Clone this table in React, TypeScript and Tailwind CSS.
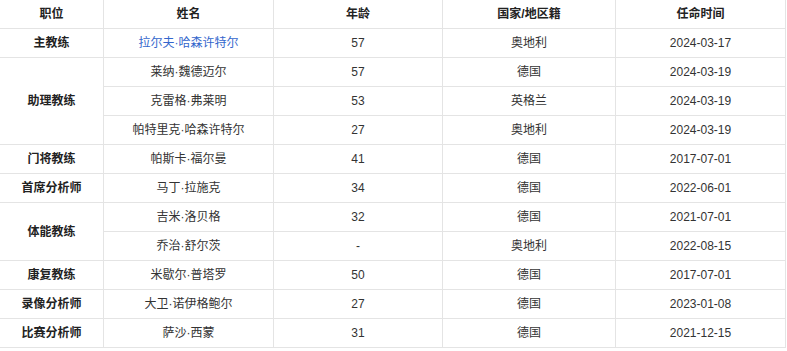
import React from "react"

type Row = { name: string; age: string; country: string; date: string; link?: boolean }
type Group = { role: string; rows: Row[] }

const groups: Group[] = [
  { role: "主教练", rows: [{ name: "拉尔夫·哈森许特尔", age: "57", country: "奥地利", date: "2024-03-17", link: true }] },
  {
    role: "助理教练",
    rows: [
      { name: "莱纳·魏德迈尔", age: "57", country: "德国", date: "2024-03-19" },
      { name: "克雷格·弗莱明", age: "53", country: "英格兰", date: "2024-03-19" },
      { name: "帕特里克·哈森许特尔", age: "27", country: "奥地利", date: "2024-03-19" },
    ],
  },
  { role: "门将教练", rows: [{ name: "帕斯卡·福尔曼", age: "41", country: "德国", date: "2017-07-01" }] },
  { role: "首席分析师", rows: [{ name: "马丁·拉施克", age: "34", country: "德国", date: "2022-06-01" }] },
  {
    role: "体能教练",
    rows: [
      { name: "吉米·洛贝格", age: "32", country: "德国", date: "2021-07-01" },
      { name: "乔治·舒尔茨", age: "-", country: "奥地利", date: "2022-08-15" },
    ],
  },
  { role: "康复教练", rows: [{ name: "米歇尔·普塔罗", age: "50", country: "德国", date: "2017-07-01" }] },
  { role: "录像分析师", rows: [{ name: "大卫·诺伊格鲍尔", age: "27", country: "德国", date: "2023-01-08" }] },
  { role: "比赛分析师", rows: [{ name: "萨沙·西蒙", age: "31", country: "德国", date: "2021-12-15" }] },
]

const cell = "h-[29px] border-r border-b border-[#e4e4e4] text-center align-middle p-0"

export default function App() {
  return (
    <div className="bg-white w-[787px] h-[351px] font-['Liberation_Sans','Noto_Sans_CJK_SC',sans-serif] text-[12px] text-[#333]">
      <table className="table-fixed border-separate border-spacing-0 w-[786px]">
        <colgroup>
          <col className="w-[104px]" />
          <col className="w-[170px]" />
          <col className="w-[169px]" />
          <col className="w-[173px]" />
          <col className="w-[170px]" />
        </colgroup>
        <thead>
          <tr className="font-bold text-[#222]">
            <th className={cell}>职位</th>
            <th className={cell}>姓名</th>
            <th className={cell}>年龄</th>
            <th className={cell}>国家/地区籍</th>
            <th className={cell}>任命时间</th>
          </tr>
        </thead>
        <tbody>
          {groups.map((g) =>
            g.rows.map((r, i) => (
              <tr key={g.role + r.name}>
                {i === 0 && (
                  <td rowSpan={g.rows.length} className={cell + " font-bold text-[#222]"}>
                    {g.role}
                  </td>
                )}
                <td className={cell}>
                  {r.link ? <span className="text-[#3366cc]">{r.name}</span> : r.name}
                </td>
                <td className={cell}>{r.age}</td>
                <td className={cell}>{r.country}</td>
                <td className={cell}>{r.date}</td>
              </tr>
            )),
          )}
        </tbody>
      </table>
    </div>
  )
}
